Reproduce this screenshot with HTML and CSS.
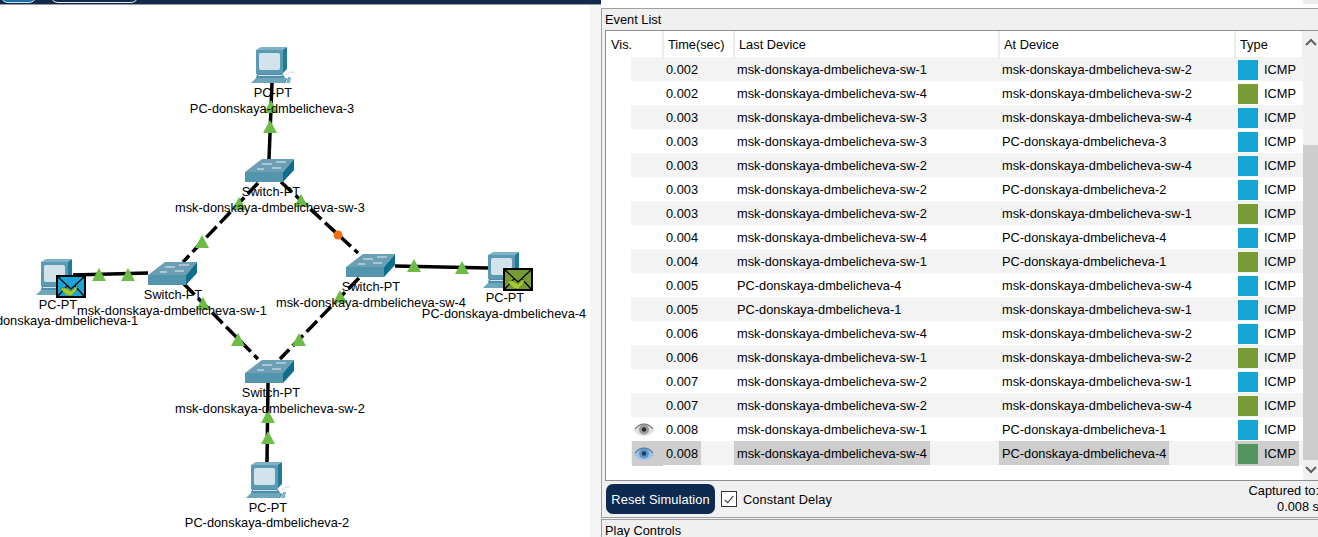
FILE: index.html
```html
<!DOCTYPE html>
<html lang="en">
<head>
    <meta charset="UTF-8">
    <title>Simulation Panel</title>
    <link rel="stylesheet" href="styles.css">
</head>
<body>
    <div class="workspace">
        <div class="topbar">
            <span class="pill pill-blue"></span>
            <span class="pill pill-white"></span>
        </div>
        <div class="canvas-wrap">
            <svg class="canvas" width="590" height="532" viewBox="0 5 590 532">
                <defs>
                    <g id="pc">
                        <polygon class="pc-side" points="31,3 36,0 36,22 31,27"/>
                        <polygon class="pc-top" points="5,3 10,0 36,0 31,3"/>
                        <rect class="pc-front" x="5" y="3" width="27" height="24"/>
                        <rect class="pc-screen" x="8" y="6" width="21" height="17" rx="2"/>
                        <polygon class="pc-stand" points="6,27 31,27 33,29 34,31 5,31"/>
                        <rect class="pc-line" x="7" y="28" width="24" height="1"/>
                        <polygon class="pc-base" points="5,31 35,31 33,36 0,36"/>
                        <polygon class="pc-side" points="35,31 36,32 34,36 33,36"/>
                        <path class="pc-mouse" d="M35 36 l2 -6 h3 l-1 6z"/>
                        <path class="pc-cord" d="M35 28 q4 -4 9 -3"/>
                    </g>
                    <g id="switch">
                        <polygon class="sw-top" points="17,0 49,0 38,13 0,13"/>
                        <polygon class="sw-front" points="0,13 38,13 38,23 0,23"/>
                        <polygon class="sw-side" points="38,13 49,0 49,11 38,23"/>
                        <path class="sw-arrow" d="M17 5 h10 M31 3 h10 M12 10 h7 M27 9 h9"/>
                    </g>
                    <g id="envelope">
                        <rect width="28" height="21" class="env-border"/>
                        <path class="env-line" d="M1 1 L14 13 L27 1 M1 20 L10 10 M27 20 L18 10"/>
                        <path class="env-check" d="M3 12 L9 12 L14 15 L21 9 L19 15 L14 20 L9 19z"/>
                    </g>
                    <polygon id="tri" points="0,0 7,13 -7,13"/>
                </defs>

                <path class="link" d="M272 83 L269 159"/>
                <path class="link" d="M73 275 L148 273"/>
                <path class="link" d="M395 266 L488 268"/>
                <path class="link" d="M268 383 L267 462"/>
                <path class="link dashed" d="M258 183 L183 262"/>
                <path class="link dashed" d="M281 182 L358 253"/>
                <path class="link dashed" d="M184 284 L258 359"/>
                <path class="link dashed" d="M359 278 L280 359"/>

                <use href="#pc" x="251" y="47"/>
                <use href="#pc" x="36" y="259"/>
                <use href="#pc" x="246" y="462"/>
                <use href="#pc" x="483" y="252"/>
                <use href="#switch" x="245" y="159"/>
                <use href="#switch" x="148" y="262"/>
                <use href="#switch" x="245" y="360"/>
                <use href="#switch" x="346" y="254"/>

                <use href="#tri" class="tri" x="271" y="100"/>
                <use href="#tri" class="tri" x="270" y="120"/>
                <use href="#tri" class="tri" x="239" y="197"/>
                <use href="#tri" class="tri" x="301" y="194"/>
                <use href="#tri" class="tri" x="202" y="235"/>
                <use href="#tri" class="tri" x="99" y="268"/>
                <use href="#tri" class="tri" x="128" y="268"/>
                <use href="#tri" class="tri" x="203" y="297"/>
                <use href="#tri" class="tri" x="238" y="333"/>
                <use href="#tri" class="tri" x="268" y="410"/>
                <use href="#tri" class="tri" x="268" y="431"/>
                <use href="#tri" class="tri" x="299" y="333"/>
                <use href="#tri" class="tri" x="414" y="259"/>
                <use href="#tri" class="tri" x="462" y="261"/>
                <use href="#tri" class="tri" x="340" y="290"/>
                <circle class="dot" cx="338" cy="235" r="4.5"/>

                <use href="#envelope" class="env-blue" x="57" y="276"/>
                <use href="#envelope" class="env-green" x="504" y="269"/>

                <text x="273" y="97">PC-PT</text>
                <text x="272" y="113">PC-donskaya-dmbelicheva-3</text>
                <text x="271" y="196">Switch-PT</text>
                <text x="270" y="212">msk-donskaya-dmbelicheva-sw-3</text>
                <text x="173" y="299">Switch-PT</text>
                <text x="172" y="315">msk-donskaya-dmbelicheva-sw-1</text>
                <text x="58" y="309">PC-PT</text>
                <text x="56" y="325">PC-donskaya-dmbelicheva-1</text>
                <text x="271" y="397">Switch-PT</text>
                <text x="270" y="413">msk-donskaya-dmbelicheva-sw-2</text>
                <text x="268" y="512">PC-PT</text>
                <text x="267" y="527">PC-donskaya-dmbelicheva-2</text>
                <text x="371" y="291">Switch-PT</text>
                <text x="371" y="307">msk-donskaya-dmbelicheva-sw-4</text>
                <text x="505" y="302">PC-PT</text>
                <text x="504" y="318">PC-donskaya-dmbelicheva-4</text>
            </svg>
            <div class="canvas-edge"></div>
        </div>
    </div>

    <div class="side">
        <div class="side-top"><span class="side-top-corner"></span></div>

        <section class="panel event-panel">
            <div class="panel-title">Event List</div>
            <div class="event-box">
                <div class="event-table">
                    <div class="head">
                        <div class="head-cell">Vis.</div>
                        <div class="head-cell">Time(sec)</div>
                        <div class="head-cell">Last Device</div>
                        <div class="head-cell">At Device</div>
                        <div class="head-cell">Type</div>
                    </div>
                    <div class="rows">
                        <div class="row"><div class="vis"></div><div class="cell"><span>0.002</span></div><div class="cell"><span>msk-donskaya-dmbelicheva-sw-1</span></div><div class="cell"><span>msk-donskaya-dmbelicheva-sw-2</span></div><div class="type"><i class="swatch blue"></i>ICMP</div></div>
                        <div class="row"><div class="vis"></div><div class="cell"><span>0.002</span></div><div class="cell"><span>msk-donskaya-dmbelicheva-sw-4</span></div><div class="cell"><span>msk-donskaya-dmbelicheva-sw-2</span></div><div class="type"><i class="swatch green"></i>ICMP</div></div>
                        <div class="row"><div class="vis"></div><div class="cell"><span>0.003</span></div><div class="cell"><span>msk-donskaya-dmbelicheva-sw-3</span></div><div class="cell"><span>msk-donskaya-dmbelicheva-sw-4</span></div><div class="type"><i class="swatch blue"></i>ICMP</div></div>
                        <div class="row"><div class="vis"></div><div class="cell"><span>0.003</span></div><div class="cell"><span>msk-donskaya-dmbelicheva-sw-3</span></div><div class="cell"><span>PC-donskaya-dmbelicheva-3</span></div><div class="type"><i class="swatch blue"></i>ICMP</div></div>
                        <div class="row"><div class="vis"></div><div class="cell"><span>0.003</span></div><div class="cell"><span>msk-donskaya-dmbelicheva-sw-2</span></div><div class="cell"><span>msk-donskaya-dmbelicheva-sw-4</span></div><div class="type"><i class="swatch blue"></i>ICMP</div></div>
                        <div class="row"><div class="vis"></div><div class="cell"><span>0.003</span></div><div class="cell"><span>msk-donskaya-dmbelicheva-sw-2</span></div><div class="cell"><span>PC-donskaya-dmbelicheva-2</span></div><div class="type"><i class="swatch blue"></i>ICMP</div></div>
                        <div class="row"><div class="vis"></div><div class="cell"><span>0.003</span></div><div class="cell"><span>msk-donskaya-dmbelicheva-sw-2</span></div><div class="cell"><span>msk-donskaya-dmbelicheva-sw-1</span></div><div class="type"><i class="swatch green"></i>ICMP</div></div>
                        <div class="row"><div class="vis"></div><div class="cell"><span>0.004</span></div><div class="cell"><span>msk-donskaya-dmbelicheva-sw-4</span></div><div class="cell"><span>PC-donskaya-dmbelicheva-4</span></div><div class="type"><i class="swatch blue"></i>ICMP</div></div>
                        <div class="row"><div class="vis"></div><div class="cell"><span>0.004</span></div><div class="cell"><span>msk-donskaya-dmbelicheva-sw-1</span></div><div class="cell"><span>PC-donskaya-dmbelicheva-1</span></div><div class="type"><i class="swatch green"></i>ICMP</div></div>
                        <div class="row"><div class="vis"></div><div class="cell"><span>0.005</span></div><div class="cell"><span>PC-donskaya-dmbelicheva-4</span></div><div class="cell"><span>msk-donskaya-dmbelicheva-sw-4</span></div><div class="type"><i class="swatch blue"></i>ICMP</div></div>
                        <div class="row"><div class="vis"></div><div class="cell"><span>0.005</span></div><div class="cell"><span>PC-donskaya-dmbelicheva-1</span></div><div class="cell"><span>msk-donskaya-dmbelicheva-sw-1</span></div><div class="type"><i class="swatch blue"></i>ICMP</div></div>
                        <div class="row"><div class="vis"></div><div class="cell"><span>0.006</span></div><div class="cell"><span>msk-donskaya-dmbelicheva-sw-4</span></div><div class="cell"><span>msk-donskaya-dmbelicheva-sw-2</span></div><div class="type"><i class="swatch blue"></i>ICMP</div></div>
                        <div class="row"><div class="vis"></div><div class="cell"><span>0.006</span></div><div class="cell"><span>msk-donskaya-dmbelicheva-sw-1</span></div><div class="cell"><span>msk-donskaya-dmbelicheva-sw-2</span></div><div class="type"><i class="swatch green"></i>ICMP</div></div>
                        <div class="row"><div class="vis"></div><div class="cell"><span>0.007</span></div><div class="cell"><span>msk-donskaya-dmbelicheva-sw-2</span></div><div class="cell"><span>msk-donskaya-dmbelicheva-sw-1</span></div><div class="type"><i class="swatch blue"></i>ICMP</div></div>
                        <div class="row"><div class="vis"></div><div class="cell"><span>0.007</span></div><div class="cell"><span>msk-donskaya-dmbelicheva-sw-2</span></div><div class="cell"><span>msk-donskaya-dmbelicheva-sw-4</span></div><div class="type"><i class="swatch green"></i>ICMP</div></div>
                        <div class="row">
                            <div class="vis">
                                <svg class="eye eye-gray" width="22" height="14" viewBox="0 0 22 14">
                                    <path class="eye-ball" d="M1 7 Q5 1 11 1 Q17 1 21 8 Q16 13 11 13 Q5 13 1 7z"/>
                                    <circle class="eye-iris" cx="11" cy="6.5" r="5"/>
                                    <circle class="eye-pupil" cx="11" cy="6.5" r="2.2"/>
                                    <path class="eye-lid" d="M2 6 Q6 1 11 1 Q16 1 20 6"/>
                                </svg>
                            </div>
                            <div class="cell"><span>0.008</span></div><div class="cell"><span>msk-donskaya-dmbelicheva-sw-1</span></div><div class="cell"><span>PC-donskaya-dmbelicheva-1</span></div><div class="type"><i class="swatch blue"></i>ICMP</div>
                        </div>
                        <div class="row selected">
                            <div class="vis">
                                <svg class="eye eye-blue" width="22" height="14" viewBox="0 0 22 14">
                                    <path class="eye-ball" d="M1 7 Q5 1 11 1 Q17 1 21 8 Q16 13 11 13 Q5 13 1 7z"/>
                                    <circle class="eye-iris" cx="11" cy="6.5" r="5"/>
                                    <circle class="eye-pupil" cx="11" cy="6.5" r="2.2"/>
                                    <path class="eye-lid" d="M2 6 Q6 1 11 1 Q16 1 20 6"/>
                                </svg>
                            </div>
                            <div class="cell"><span>0.008</span></div><div class="cell"><span>msk-donskaya-dmbelicheva-sw-4</span></div><div class="cell"><span>PC-donskaya-dmbelicheva-4</span></div><div class="type"><i class="swatch teal"></i>ICMP</div>
                        </div>
                    </div>
                </div>
                <div class="scrollbar">
                    <svg class="chevron" width="14" height="8" viewBox="0 0 14 8"><path d="M2 7 L7 2 L12 7"/></svg>
                    <div class="scroll-track"><div class="scroll-thumb"></div></div>
                    <svg class="chevron" width="14" height="8" viewBox="0 0 14 8"><path d="M2 1 L7 6 L12 1"/></svg>
                </div>
            </div>
            <div class="event-actions">
                <button class="reset-btn">Reset Simulation</button>
                <span class="check">
                    <svg width="15" height="15" viewBox="0 0 15 15"><path d="M3 8 L6 11 L12 4"/></svg>
                </span>
                <span class="check-label">Constant Delay</span>
                <div class="captured">Captured to:<br>0.008 s</div>
            </div>
        </section>

        <section class="panel play-panel">
            <div class="panel-title">Play Controls</div>
        </section>
    </div>
</body>
</html>
```

FILE: styles.css
```css
* {
    box-sizing: border-box;
}
html, body {
    height: 537px;
    overflow: hidden;
}
body {
    margin: 0;
    display: flex;
    width: 1318px;
    background-color: #f0f0f0;
    color: #000;
    font-family: "Liberation Sans", Arial, sans-serif;
    font-size: 12.8px;
}

/* left side: topology */
.workspace {
    width: 601px;
    flex: none;
}
.topbar {
    display: flex;
    gap: 13px;
    height: 5px;
    background-color: #10294c;
    border-bottom: 1px solid #9a9a9a;
    overflow: hidden;
}
.pill {
    flex: none;
    height: 23px;
    margin-top: -20px;
    border-radius: 8px;
}
.pill-blue {
    width: 37px;
    background-color: #1b6fa8;
    border: 1px solid #cfe3f0;
}
.pill-white {
    width: 89px;
    background-color: #10294c;
    border: 1px solid #e8edf2;
}
.canvas-wrap {
    display: flex;
    height: 532px;
}
.canvas {
    display: block;
    flex: none;
    background-color: #fff;
    overflow: hidden;
}
.canvas-edge {
    flex: 1;
    background-color: #f5f5f5;
}
.canvas text {
    font-size: 12.8px;
    text-anchor: middle;
    fill: #000;
}
.link {
    stroke: #000;
    stroke-width: 3.5;
    fill: none;
}
.dashed {
    stroke-dasharray: 15 5;
}
.tri {
    fill: #6cbc45;
}
.dot {
    fill: #f26f12;
}
.pc-front { fill: #5b9ab2; }
.pc-top { fill: #7fb2c5; }
.pc-side { fill: #1f7b98; }
.pc-screen { fill: #d3e3eb; }
.pc-stand { fill: #4f8ea8; }
.pc-line { fill: #d3e3eb; }
.pc-base { fill: #6ea6ba; }
.pc-mouse { fill: #7fb2c5; }
.pc-cord { fill: none; stroke: #c8dce5; stroke-width: 1; }
.sw-top { fill: #6c9fb4; }
.sw-front { fill: #5495ae; }
.sw-side { fill: #0e6e8e; }
.sw-arrow { stroke: #e4eff4; stroke-width: 1; fill: none; }
.env-blue { fill: #1aa5d6; }
.env-green { fill: #779c36; }
.env-border {
    stroke: #000;
    stroke-width: 2;
}
.env-line {
    fill: none;
    stroke: #000;
    stroke-width: 1.2;
}
.env-check {
    fill: #a3cc32;
    stroke: #4d6b1e;
    stroke-width: 0.5;
}

/* right side: panels */
.side {
    width: 740px;
    flex: none;
}
.side-top {
    display: flex;
    justify-content: flex-end;
    height: 8px;
    background-color: #fff;
}
.side-top-corner {
    width: 38px;
    height: 4px;
    background-color: #ececec;
}
.panel {
    background-color: #f0f0f0;
    border-top: 1px solid #a0a0a0;
    border-left: 1px solid #a0a0a0;
}
.event-panel {
    height: 510px;
    padding-left: 3px;
    border-bottom: 1px solid #a0a0a0;
    margin-bottom: 1px;
}
.play-panel {
    height: 30px;
    padding-left: 3px;
}
.panel-title {
    height: 21px;
    line-height: 22px;
}
.event-box {
    display: flex;
    height: 451px;
    border: 1px solid #8c9096;
    background-color: #fff;
}
.event-table {
    width: 697px;
    flex: none;
}
.head {
    display: grid;
    grid-template-columns: 57px 71px 265px 236px 68px;
    height: 26px;
    line-height: 27px;
}
.head-cell {
    padding-left: 5px;
    border-right: 2px solid #ececec;
    margin-right: -1px;
}
.rows {
    margin-left: 25px;
}
.row {
    display: grid;
    grid-template-columns: 32px 71px 265px 236px 68px;
    height: 24px;
    line-height: 25px;
}
.row:nth-child(odd) {
    background-color: #f3f3f3;
}
.vis {
    display: flex;
    align-items: center;
    padding-left: 2px;
}
.cell {
    white-space: nowrap;
}
.cell span {
    display: inline-block;
    height: 24px;
    padding: 0 3px;
}
.type {
    display: flex;
    align-items: center;
    gap: 6px;
    padding-left: 3px;
    margin-right: 4px;
}
.swatch {
    width: 20px;
    height: 20px;
}
.blue { background-color: #16a5d5; }
.green { background-color: #789c36; }
.teal { background-color: #54945f; }
.selected .vis,
.selected .cell span,
.selected .type {
    background-color: #cdcdcd;
}
.selected .vis {
    margin-left: 1px;
    padding-left: 1px;
}
.eye-gray .eye-ball { fill: #dedede; }
.eye-gray .eye-iris { fill: #9a9a9a; }
.eye-gray .eye-pupil { fill: #2a2a2a; }
.eye-gray .eye-lid { fill: none; stroke: #6a6a6a; stroke-width: 1.2; }
.eye-blue .eye-ball { fill: #9cc3e4; }
.eye-blue .eye-iris { fill: #5f95c6; }
.eye-blue .eye-pupil { fill: #1d3d60; }
.eye-blue .eye-lid { fill: none; stroke: #3f75a5; stroke-width: 1.2; }
.scrollbar {
    display: flex;
    flex-direction: column;
    align-items: center;
    width: 15px;
    padding: 7px 0 6px;
    background-color: #f0f0f0;
}
.chevron {
    flex: none;
}
.chevron path {
    fill: none;
    stroke: #606060;
    stroke-width: 2;
}
.scroll-track {
    flex: 1;
    width: 100%;
    padding-top: 99px;
    padding-bottom: 6px;
}
.scroll-thumb {
    height: 100%;
    background-color: #cdcdcd;
}
.event-actions {
    display: flex;
    align-items: center;
    height: 36px;
    padding-left: 1px;
}
.reset-btn {
    width: 109px;
    height: 30px;
    margin-right: 6px;
    padding: 0;
    border: none;
    border-radius: 7px;
    background-color: #0f2a50;
    color: #fff;
    font: inherit;
    letter-spacing: 0.1px;
}
.check {
    display: flex;
    width: 16px;
    height: 16px;
    margin-right: 6px;
    border: 1px solid #333;
    background-color: #fff;
}
.check path {
    fill: none;
    stroke: #333;
    stroke-width: 1.2;
}
.check-label {
    letter-spacing: 0.1px;
}
.captured {
    margin-left: auto;
    margin-right: 22px;
    text-align: right;
    line-height: 16px;
}
```
